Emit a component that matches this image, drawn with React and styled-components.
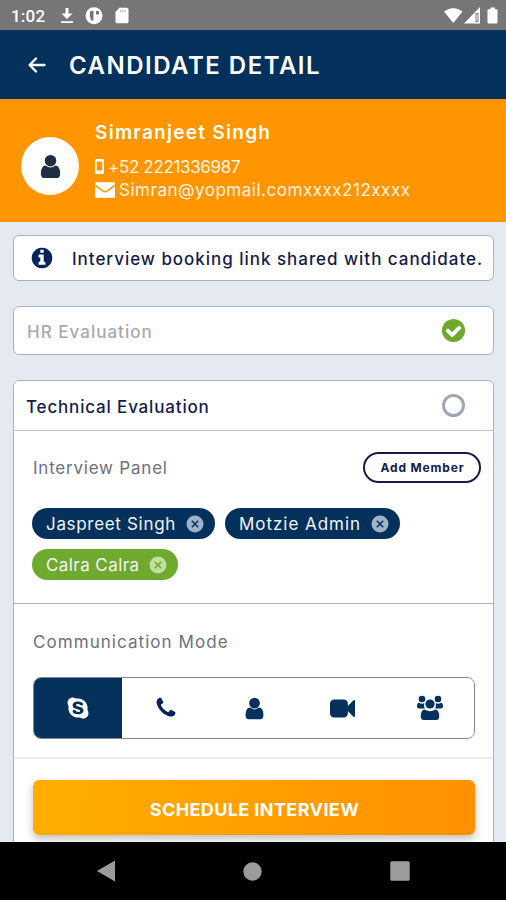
import React from 'react'
import styled, { createGlobalStyle } from 'styled-components'
import { FaSkype } from 'react-icons/fa'

const candidate = {
  name: 'Simranjeet Singh',
  phone: '+52 2221336987',
  email: 'Simran@yopmail.comxxxx212xxxx',
}

const members = [
  { name: 'Jaspreet Singh', spacing: 0.68 },
  { name: 'Motzie Admin', spacing: 0.96 },
  { name: 'Calra Calra', spacing: 0.42, own: true },
]

const icons = {
  user: 'M1536 1399q0 109-62.5 187t-150.5 78h-854q-88 0-150.5-78t-62.5-187q0-85 8.5-160.5t31.5-152 58.5-131 94-89 134.5-34.5q131 128 313 128t313-128q76 0 134.5 34.5t94 89 58.5 131 31.5 152 8.5 160.5zm-256-887q0 159-112.5 271.5t-271.5 112.5-271.5-112.5-112.5-271.5 112.5-271.5 271.5-112.5 271.5 112.5 112.5 271.5z',
  phone: 'M1600 1240q0 27-10 70.5t-21 68.5q-21 50-122 106-94 51-186 51-27 0-53-3.5t-57.5-12.5-47-14.5-55.5-20.5-49-18q-98-35-175-83-127-79-264-216t-216-264q-48-77-83-175-3-9-18-49t-20.5-55.5-14.5-47-12.5-57.5-3.5-53q0-92 51-186 56-101 106-122 25-11 68.5-21t70.5-10q14 0 21 3 18 6 53 76 11 19 30 54t35 63.5 31 53.5q3 4 17.5 25t21.5 35.5 7 28.5q0 20-28.5 50t-62 55-62 53-28.5 46q0 9 5 22.5t8.5 20.5 14 24 11.5 19q76 137 174 235t235 174q2 1 19 11.5t24 14 20.5 8.5 22.5 5q18 0 46-28.5t53-62 55-62 50-28.5q14 0 28.5 7t35.5 21.5 25 17.5q25 15 53.5 31t63.5 35 54 30q70 35 76 53 3 7 3 21z',
  video: 'M1792 352v1088q0 42-39 59-13 5-25 5-27 0-45-19l-403-403v166q0 119-84.5 203.5t-203.5 84.5h-704q-119 0-203.5-84.5t-84.5-203.5v-704q0-119 84.5-203.5t203.5-84.5h704q119 0 203.5 84.5t84.5 203.5v165l403-402q18-19 45-19 12 0 25 5 39 17 39 59z',
  check: 'M1412 734q0-28-18-46l-91-90q-19-19-45-19t-45 19l-408 407-226-226q-19-19-45-19t-45 19l-91 90q-18 18-18 46 0 27 18 45l362 362q19 19 45 19 27 0 46-19l543-543q18-18 18-45zm252 162q0 209-103 385.5t-279.5 279.5-385.5 103-385.5-103-279.5-279.5-103-385.5 103-385.5 279.5-279.5 385.5-103 385.5 103 279.5 279.5 103 385.5z',
  info: 'M1152 1376v-160q0-14-9-23t-23-9h-96v-512q0-14-9-23t-23-9h-320q-14 0-23 9t-9 23v160q0 14 9 23t23 9h96v320h-96q-14 0-23 9t-9 23v160q0 14 9 23t23 9h448q14 0 23-9t9-23zm-128-896v-160q0-14-9-23t-23-9h-192q-14 0-23 9t-9 23v160q0 14 9 23t23 9h192q14 0 23-9t9-23zm640 416q0 209-103 385.5t-279.5 279.5-385.5 103-385.5-103-279.5-279.5-103-385.5 103-385.5 279.5-279.5 385.5-103 385.5 103 279.5 279.5 103 385.5z',
}

const Icon = ({ name, size, color }) => (
  <svg width={size} height={size} viewBox="0 0 1792 1792" fill={color}>
    <path d={icons[name]} />
  </svg>
)

const GroupIcon = () => (
  <svg width="28" height="26" viewBox="0 0 28 26" fill="#04305c">
    <circle cx="6" cy="4" r="3.3" />
    <circle cx="22" cy="4" r="3.3" />
    <path d="M1 11.5q0-3.7 2-3.700 3 1.600 5.200.3-.5 3.400.6 5.400H3.200Q1 13.500 1 11.500z" />
    <path d="M27 11.500q0-3.700-2-3.700-3 1.600-5.200.3.500 3.400-.6 5.400h5.600q2.200 0 2.200-2z" />
    <circle cx="14" cy="9" r="4.600" />
    <path d="M4.800 21.500q0-6.500 3.800-6.900 5.400 3.200 10.800 0 3.800.4 3.800 6.900 0 3.500-3.200 3.500H8q-3.200 0-3.200-3.500z" />
  </svg>
)

const RemoveIcon = ({ own }) => (
  <svg width="18" height="18" viewBox="0 0 18 18">
    <circle cx="9" cy="9" r="8.500" fill={own ? '#bfe0a0' : '#9fb2c8'} />
    <path d="M5.800 5.800l6.400 6.400M12.200 5.800l-6.400 6.400" stroke={own ? '#6fa92e' : '#04305c'} strokeWidth="1.500" />
  </svg>
)

export default function App() {
  return (
    <Screen>
      <GlobalStyle />
      <StatusBar>
        <Clock>1:02</Clock>
        <svg width="70" height="18" viewBox="0 0 70 18" fill="#fff">
          <path d="M5.500 1h3v5.500h4L7 12 1.500 6.500h4zM1 14.200h12v1.900H1z" />
          <circle cx="34" cy="8.700" r="8.500" />
          <path d="M30 4h3.500v9.500H31q-2-4.500-1-9.500zM36 4h3v3.500h-3z" fill="#767676" />
          <path d="M59.500.800H67q1.500 0 1.500 1.500v12.500q0 1.500-1.500 1.500H57q-1.500 0-1.500-1.500V5z" />
          <path d="M60 3h1.200v2.200H60zM62.300 3h1.200v2.200h-1.200zM64.600 3h1.200v2.200h-1.200z" fill="#b5b5b5" />
        </svg>
        <Signals width="56" height="18" viewBox="0 0 56 18" fill="#fff">
          <path d="M1 4.500Q10.300-2.500 19.600 4.500L10.300 16z" />
          <path fillRule="evenodd" d="M37 0v16.500H21zM35.500 6h-3v9h3z" />
          <path d="M33.500 7h1v7h-1z" />
          <path d="M47.500.5h4.500v1.700h1.500q1 0 1 1v12.200q0 1-1 1h-8q-1 0-1-1V3.200q0-1 1-1h2z" />
        </Signals>
      </StatusBar>
      <Header>
        <svg width="18" height="16" viewBox="0 0 18 16" fill="none" stroke="#fff" strokeWidth="2.300" strokeLinecap="round" strokeLinejoin="round">
          <path d="M16.500 8H2M8 1.500L1.600 8 8 14.500" />
        </svg>
        <Title>CANDIDATE DETAIL</Title>
      </Header>
      <Profile>
        <Avatar>
          <Icon name="user" size={27} color="#1d2f40" />
        </Avatar>
        <Contacts>
          <Name>{candidate.name}</Name>
          <Contact $spacing={-0.34}>
            <svg width="9" height="15" viewBox="0 0 9 15" fill="#fff">
              <path fillRule="evenodd" d="M1.500 0h6Q9 0 9 1.500v12Q9 15 7.500 15h-6Q0 15 0 13.500v-12Q0 0 1.500 0zM1.800 2.500v9h5.400v-9z" />
            </svg>
            <span>{candidate.phone}</span>
          </Contact>
          <Contact $spacing={0.52}>
            <svg width="20" height="16" viewBox="0 0 20 16" fill="#fff">
              <path d="M0 2.200V1.500Q0 .3 1.200.3h17.600Q20 .3 20 1.500v.7l-8 6q-2 1.500-4 0zM0 4.200l7.200 5.400q2.800 2 5.600 0L20 4.200v10.300q0 1.200-1.200 1.200H1.200Q0 15.700 0 14.500z" />
            </svg>
            <span>{candidate.email}</span>
          </Contact>
        </Contacts>
      </Profile>
      <Content>
        <Notice>
          <Icon name="info" size={24} color="#04245a" />
          <NoticeText>Interview booking link shared with candidate.</NoticeText>
        </Notice>
        <Stage>
          <StageTitle $color="#a9a9ab" $spacing={1.02}>HR Evaluation</StageTitle>
          <Icon name="check" size={27} color="#6fa92a" />
        </Stage>
        <Card>
          <CardHeader>
            <StageTitle $color="#141c4c" $spacing={0.83}>Technical Evaluation</StageTitle>
            <Radio />
          </CardHeader>
          <Panel>
            <PanelHeader>
              <Label $spacing={0.78}>Interview Panel</Label>
              <AddButton>Add Member</AddButton>
            </PanelHeader>
            <Chips>
              {members.map(({ name, spacing, own }) => (
                <Chip key={name} $own={own} $spacing={spacing}>
                  <span>{name}</span>
                  <RemoveIcon own={own} />
                </Chip>
              ))}
            </Chips>
          </Panel>
          <Modes>
            <Label $spacing={1.06}>Communication Mode</Label>
            <ModeGroup>
              <Mode $active><FaSkype size={24} /></Mode>
              <Mode><Icon name="phone" size={24} color="#04245a" /></Mode>
              <Mode><Icon name="user" size={25} color="#04305c" /></Mode>
              <Mode><Icon name="video" size={25} color="#04305c" /></Mode>
              <Mode><GroupIcon /></Mode>
            </ModeGroup>
          </Modes>
          <Footer>
            <ScheduleButton>SCHEDULE INTERVIEW</ScheduleButton>
          </Footer>
        </Card>
      </Content>
      <NavBar>
        <svg width="18" height="22" viewBox="0 0 18 22" fill="#9c9c9c"><path d="M0 11L18 .5v21z" /></svg>
        <svg width="19" height="19" viewBox="0 0 19 19" fill="#9c9c9c"><circle cx="9.500" cy="9.500" r="9.200" /></svg>
        <svg width="20" height="20" viewBox="0 0 20 20" fill="#9c9c9c"><rect x=".3" y=".3" width="19.400" height="19.400" rx="1.500" /></svg>
      </NavBar>
    </Screen>
  )
}

const GlobalStyle = createGlobalStyle`
  * {
    box-sizing: border-box;
  }
  body {
    margin: 0;
  }
  svg {
    display: block;
    flex: none;
  }
`
const Screen = styled.div`
  display: flex;
  flex-direction: column;
  width: 506px;
  height: 900px;
  overflow: hidden;
  background: #e5e9f1;
  font-family: Inter, 'Open Sans', sans-serif;
  font-size: 17px;
  line-height: 20px;
  white-space: nowrap;
`
const StatusBar = styled.div`
  flex: none;
  display: flex;
  align-items: center;
  height: 30px;
  padding: 2px 7px 0 11px;
  background: #767676;
`
const Clock = styled.span`
  width: 49px;
  font-family: Roboto, sans-serif;
  font-size: 17px;
  font-weight: 500;
  letter-spacing: 0.2px;
  color: #fff;
`
const Signals = styled.svg`
  margin-left: auto;
`
const Header = styled.header`
  flex: none;
  display: flex;
  align-items: center;
  gap: 23px;
  height: 69px;
  padding: 0 28px;
  background: #04305c;
`
const Title = styled.h1`
  margin: 3px 0 0;
  font-size: 24px;
  font-weight: 600;
  line-height: 30px;
  letter-spacing: 1.49px;
  color: #fff;
`
const Profile = styled.section`
  flex: none;
  display: flex;
  height: 123px;
  padding: 22px 20px 0 21px;
  background: #ff9500;
`
const Avatar = styled.div`
  display: flex;
  justify-content: center;
  align-items: center;
  width: 58px;
  height: 58px;
  margin: 16px 16px 0 0;
  border-radius: 50%;
  background: #fff;
`
const Contacts = styled.div`
  color: #fff;
`
const Name = styled.div`
  margin-bottom: 10px;
  font-size: 19px;
  font-weight: 600;
  line-height: 24px;
  letter-spacing: 1.28px;
`
const Contact = styled.div`
  display: flex;
  align-items: center;
  gap: 4px;
  height: 23px;
  letter-spacing: ${({ $spacing }) => $spacing}px;
  color: #fff3e2;
`
const Content = styled.main`
  flex: 1;
  min-height: 0;
  display: flex;
  flex-direction: column;
  padding: 13px 12px 0 13px;
  overflow: hidden;
`
const Box = styled.div`
  flex: none;
  display: flex;
  align-items: center;
  border: 1px solid #a3b4c3;
  border-radius: 6px;
  background: #fff;
`
const Notice = styled(Box)`
  height: 46px;
  margin-bottom: 25px;
  padding-left: 16px;
`
const NoticeText = styled.span`
  margin: 2px 0 0 18px;
  font-weight: 500;
  letter-spacing: 0.97px;
  color: #141c4c;
`
const Stage = styled(Box)`
  justify-content: space-between;
  height: 49px;
  margin-bottom: 25px;
  padding: 0 26px 0 13px;
`
const StageTitle = styled.span`
  margin-top: 2px;
  font-weight: 500;
  letter-spacing: ${({ $spacing }) => $spacing}px;
  color: ${({ $color }) => $color};
`
const Card = styled.div`
  flex: none;
  border: 1px solid #a3b4c3;
  border-radius: 6px 6px 0 0;
  background: #fff;
`
const CardHeader = styled.div`
  display: flex;
  justify-content: space-between;
  align-items: center;
  height: 50px;
  padding: 0 28px 0 12px;
  border-bottom: 1px solid #bcc5cd;
`
const Radio = styled.div`
  width: 23px;
  height: 23px;
  border: 3px solid #a0a6b2;
  border-radius: 50%;
`
const Panel = styled.div`
  height: 173px;
  padding: 21px 12px 0 18px;
  border-bottom: 1px solid #a3b4c3;
`
const PanelHeader = styled.div`
  display: flex;
  justify-content: space-between;
  align-items: center;
  height: 31px;
  margin-bottom: 25px;
`
const Label = styled.div`
  padding-left: 1px;
  letter-spacing: ${({ $spacing }) => $spacing}px;
  color: #6c7080;
`
const AddButton = styled.button`
  width: 118px;
  height: 31px;
  padding: 0 0 0 1px;
  border: 2px solid #141c4c;
  border-radius: 16px;
  background: #fff;
  font-family: inherit;
  font-size: 12px;
  font-weight: 700;
  letter-spacing: 0.85px;
  color: #141c4c;
`
const Chips = styled.div`
  display: flex;
  flex-wrap: wrap;
  gap: 10px;
`
const Chip = styled.div`
  display: flex;
  align-items: center;
  gap: 10px;
  height: 31px;
  padding: 0 11px 0 14px;
  border-radius: 16px;
  letter-spacing: ${({ $spacing }) => $spacing}px;
  color: #f2f5f8;
  background: ${({ $own }) => ($own ? '#6fa92e' : '#04305c')};
`
const Modes = styled.div`
  height: 155px;
  padding: 28px 18px 0;
  border-bottom: 2px solid #e9ebee;
`
const ModeGroup = styled.div`
  display: flex;
  height: 62px;
  margin: 25px 0 0 1px;
  border: 1px solid #85878b;
  border-radius: 8px;
  overflow: hidden;
`
const Mode = styled.div`
  flex: 1;
  display: flex;
  justify-content: center;
  align-items: center;
  color: #fff;
  background: ${({ $active }) => ($active ? '#04305c' : '#fff')};
`
const Footer = styled.div`
  padding: 21px 18px 40px 19px;
`
const ScheduleButton = styled.button`
  display: block;
  width: 100%;
  height: 55px;
  padding: 3px 0 0 1px;
  border: 0;
  border-radius: 6px;
  background: linear-gradient(100deg, #ffae00 0%, #ff9000 100%);
  box-shadow: 0 4px 8px rgba(0, 0, 0, 0.25);
  font-family: inherit;
  font-size: 18px;
  font-weight: 700;
  letter-spacing: 0.4px;
  color: #fff;
`
const NavBar = styled.nav`
  flex: none;
  display: flex;
  justify-content: space-between;
  align-items: center;
  height: 58px;
  padding: 0 96px 0 97px;
  background: #000;
`
